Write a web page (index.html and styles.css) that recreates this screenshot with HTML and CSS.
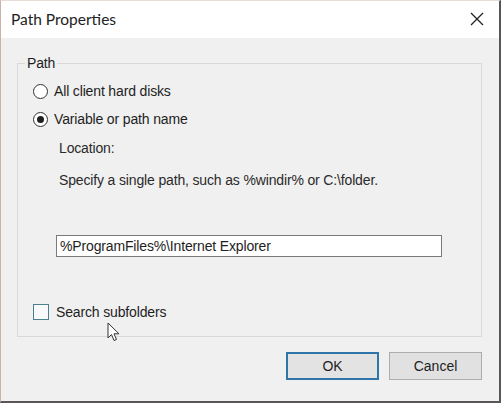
FILE: index.html
```html
<!DOCTYPE html>
<html lang="en">
<head>
    <meta charset="UTF-8">
    <title>Path Properties</title>
    <link rel="stylesheet" href="styles.css">
</head>
<body>

    <div class="window">
        <div class="titlebar">
            <span class="title">Path Properties</span>
            <svg class="close" width="14" height="14" viewBox="0 0 14 14">
                <path d="M1 1 L13 13 M13 1 L1 13" stroke="#222" stroke-width="1.3" fill="none"/>
            </svg>
        </div>

        <div class="content">
            <fieldset class="group">
                <legend>Path</legend>

                <label class="option">
                    <span class="radio"></span>
                    All client hard disks
                </label>
                <label class="option">
                    <span class="radio checked"></span>
                    Variable or path name
                </label>

                <div class="path-section">
                    <p class="hint location">Location:</p>
                    <p class="hint">Specify a single path, such as %windir% or C:\folder.</p>
                    <div class="path-input">%ProgramFiles%\Internet Explorer</div>
                </div>

                <label class="check-row">
                    <span class="checkbox"></span>
                    Search subfolders
                </label>
            </fieldset>

            <div class="buttons">
                <button class="btn btn-default">OK</button>
                <button class="btn">Cancel</button>
            </div>
        </div>

        <!-- puntero del raton sobre la casilla -->
        <svg class="pointer" width="14" height="20" viewBox="0 0 14 20">
            <path d="M1 1 L1 16 L4.5 12.5 L7 18.5 L9.5 17.5 L7 11.8 L12 11.8 Z" fill="#fff" stroke="#333" stroke-width="1" stroke-linejoin="round"/>
        </svg>
    </div>

</body>
</html>
```

FILE: styles.css
```css
body {
    margin: 0;
    background-color: #ffffff;
    font-family: "Liberation Sans", Arial, sans-serif;
    color: #1e1e1e;
    letter-spacing: -0.15px;
}

.window {
    position: relative;
    width: 498px;
    height: 400px;
    border-left: 1px solid #c9b2aa;
    border-top: 1px solid #e6dcd8;
    border-right: 2px solid #5a5656;
    border-bottom: 2px solid #5a5656;
    background-color: #f0f0f0;
    display: flex;
    flex-direction: column;
}

.titlebar {
    height: 37px;
    background-color: #ffffff;
    display: flex;
    align-items: center;
    justify-content: space-between;
    padding: 0 15px 0 10px;
}

.title {
    font-family: Lato, "Noto Sans", sans-serif;
    font-size: 15.5px;
    letter-spacing: 0;
    color: #222;
    margin-top: -2px;
}

.close {
    margin-top: -1px;
}

.content {
    padding: 16px 17px 0 16px;
}

.group {
    margin: 0;
    padding: 5px 14px 15px 15px;
    border: 1px solid #d9d9d9;
    border-radius: 0;
}

.group legend {
    font-size: 14px;
    line-height: 18px;
    padding: 0 2px;
    margin-left: -8px;
}

.option {
    display: flex;
    align-items: center;
    height: 28px;
    font-size: 14px;
}

.radio {
    width: 13px;
    height: 13px;
    border: 1px solid #333;
    border-radius: 50%;
    background-color: #ffffff;
    margin-right: 6px;
    position: relative;
    box-sizing: content-box;
}

.radio.checked::after {
    content: "";
    position: absolute;
    left: 3px;
    top: 3px;
    width: 7px;
    height: 7px;
    border-radius: 50%;
    background-color: #1e1e1e;
}

.path-section {
    padding-left: 23px;
}

.hint {
    margin: 14px 0 0 3px;
    font-size: 14px;
    line-height: 18px;
    color: #2a2a2a;
}

.hint.location {
    margin-top: 6px;
}

.path-input {
    margin-top: 46px;
    width: 381px;
    height: 20px;
    line-height: 20px;
    border: 1px solid #7a7a7a;
    background-color: #ffffff;
    font-size: 14px;
    padding-left: 3px;
}

.check-row {
    display: flex;
    align-items: center;
    margin-top: 46px;
    height: 18px;
    font-size: 14px;
}

.checkbox {
    width: 14px;
    height: 14px;
    border: 1px solid #4f7f8d;
    background-color: #f7f9fa;
    margin-right: 7px;
}

.buttons {
    display: flex;
    justify-content: flex-end;
    gap: 10px;
    margin-top: 15px;
}

.btn {
    width: 93px;
    height: 28px;
    font-family: "Liberation Sans", Arial, sans-serif;
    font-size: 14px;
    color: #1e1e1e;
    background-color: #e1e1e1;
    border: 1px solid #adadad;
    padding: 0;
}

.btn-default {
    border: 2px solid #2e75a8;
    background-color: #e3e3e3;
}

.pointer {
    position: absolute;
    left: 106px;
    top: 321px;
}
```
